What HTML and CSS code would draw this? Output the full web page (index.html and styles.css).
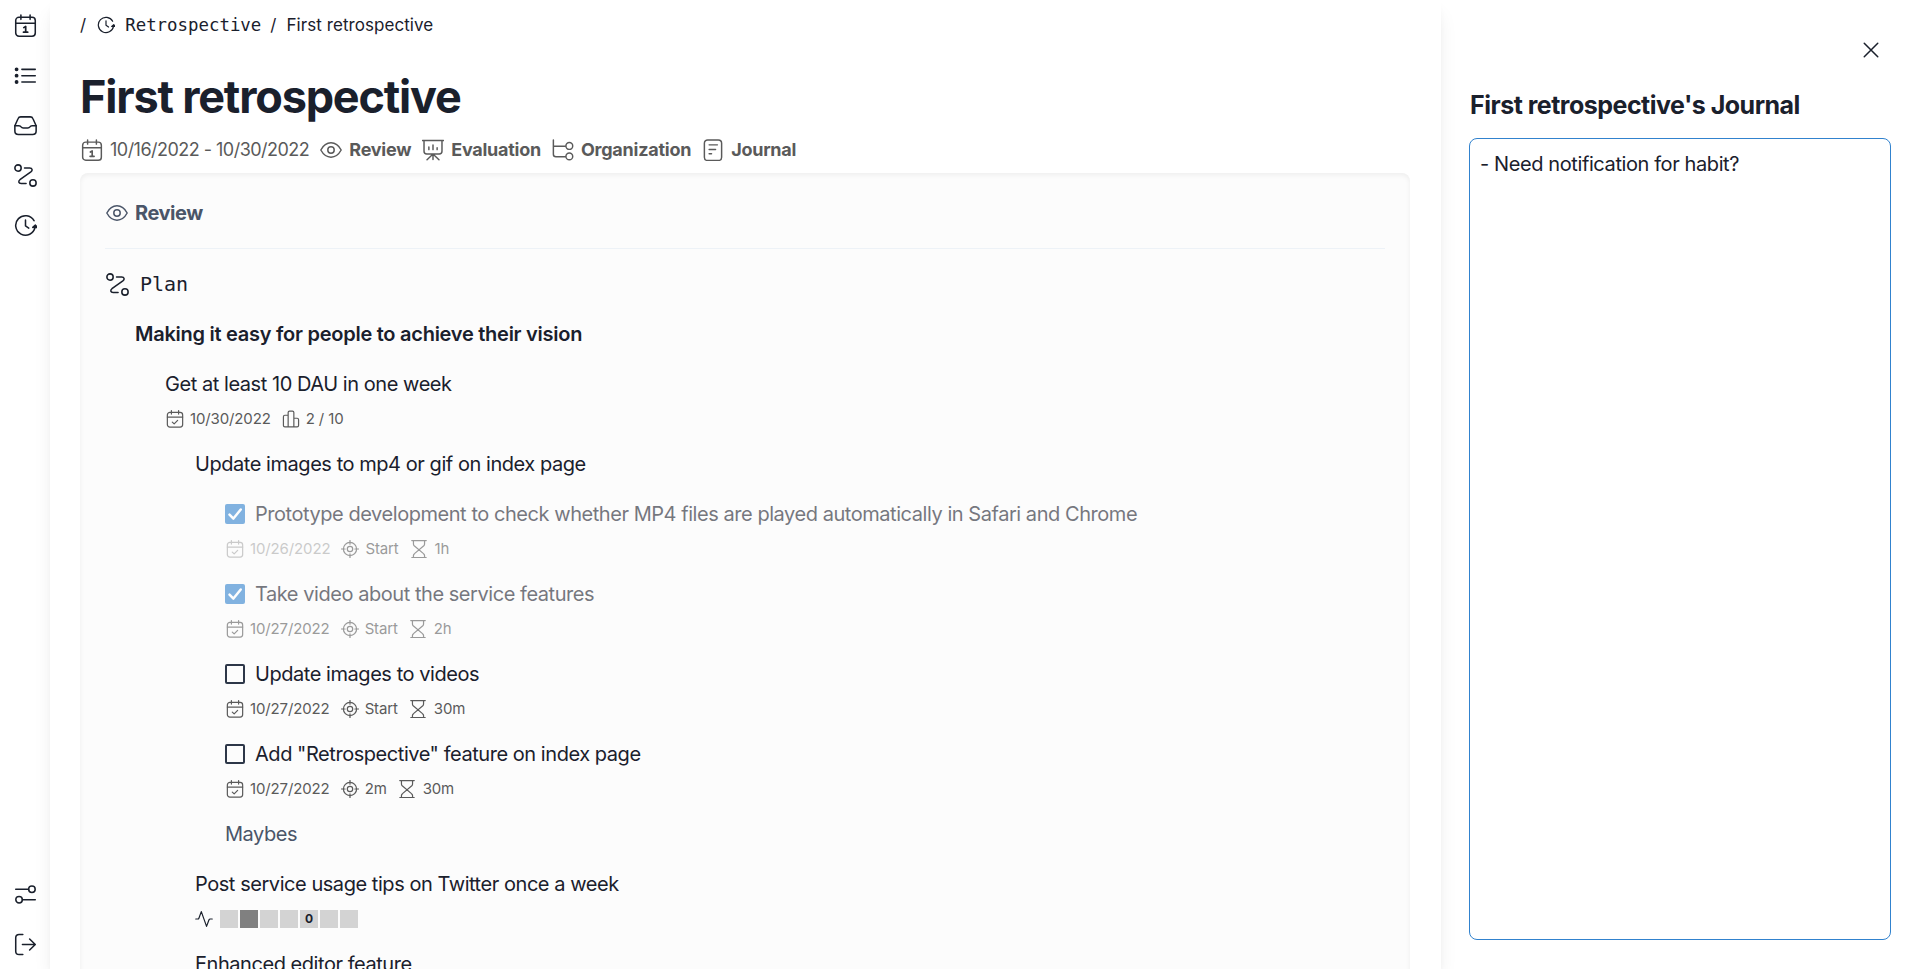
FILE: index.html
```html
<!DOCTYPE html>
<html lang="en">
<head>
  <meta charset="UTF-8">
  <title>First retrospective</title>
  <meta name="viewport" content="width=device-width, initial-scale=1">
  <link rel="stylesheet" href="styles.css">
</head>
<body>
  <!-- icon sprite -->
  <svg class="sprite" xmlns="http://www.w3.org/2000/svg">
    <symbol id="i-calendar" viewBox="0 0 24 24">
      <rect x="1.8" y="3.4" width="20.4" height="19.8" rx="3.4"/>
      <path d="M1.8 9.6h20.4M7.2 1v4.6M16.8 1v4.6"/>
      <path d="M10.2 14.200l2-1.300v6M9.900 19h4.400" stroke-width="1.8"/>
    </symbol>
    <symbol id="i-date" viewBox="0 0 24 24">
      <rect x="1.8" y="3.2" width="20.4" height="19.6" rx="3.4"/>
      <path d="M1.8 9.4h20.4M7.2 .8v4.6M16.8 .8v4.6M8.4 16.2l2.5 2.3 4.6-4.6"/>
    </symbol>
    <symbol id="i-list" viewBox="0 0 24 24">
      <path d="M8.2 5.6h14M8.2 12.2h14M8.2 18.8h14"/>
      <g fill="currentColor"><circle cx="2.7" cy="5.6" r="1.2"/><circle cx="2.7" cy="12.2" r="1.2"/><circle cx="2.7" cy="18.8" r="1.2"/></g>
    </symbol>
    <symbol id="i-inbox" viewBox="0 0 24 24">
      <path d="M.9 12.3L4.2 5Q5 3 7 3h10q2 0 2.8 2l3.3 7.3v5.4q0 3.7-3.7 3.7H4.6Q.9 21.4 .9 17.7z"/>
      <path d="M.9 12.3h4.3q1.5 0 2.2 1.2 .7 1.1 2.2 1.1h4.8q1.5 0 2.2-1.1 .7-1.2 2.2-1.2h4.3"/>
    </symbol>
    <symbol id="i-plan" viewBox="0 0 24 24">
      <circle cx="4.2" cy="4.2" r="3.3"/>
      <circle cx="19.8" cy="19.8" r="3.3"/>
      <path d="M11 4.1h5.4c2.8 0 3.3 2.500 1.200 4.200L6.200 16.400c-2 1.700-1.400 3.900 1.200 3.900h5.200"/>
    </symbol>
    <symbol id="i-retro" viewBox="0 0 24 24">
      <path d="M20.9 7A10.2 10.2 0 1 0 22 13.8"/>
      <path d="M12 6.400v6l3.400 2.300"/>
      <path d="M19.600 14l2.700-2.400 2 2.400z" fill="currentColor"/>
    </symbol>
    <symbol id="i-settings" viewBox="0 0 24 24">
      <path d="M1.8 6.6h13.4M22.2 17.4H8.800"/>
      <circle cx="18.7" cy="6.6" r="3.4"/><circle cx="5.3" cy="17.4" r="3.4"/>
    </symbol>
    <symbol id="i-logout" viewBox="0 0 24 24">
      <path d="M9.2 1.500H5.300q-3.500 0-3.500 3.500v14q0 3.500 3.500 3.500h3.900M8.800 12h13M16.300 6.200L22.200 12l-5.900 5.800"/>
    </symbol>
    <symbol id="i-eye" viewBox="0 0 24 24">
      <path d="M.9 12C3.400 7.400 7.400 4.200 12 4.200s8.600 3.200 11.100 7.800c-2.500 4.600-6.500 7.800-11.100 7.800S3.400 16.600 .9 12z"/>
      <circle cx="12" cy="12" r="3.5"/>
    </symbol>
    <symbol id="i-board" viewBox="0 0 24 24">
      <path d="M.5 1.700h23M2.200 1.700v11.600q0 3 3 3h13.600q3 0 3-3V1.700M12 16.400v6M11.500 17l-6 5.600M12.500 17l6 5.600M7.500 8.600v3M12 6.600v5M16.500 9.600v2"/>
    </symbol>
    <symbol id="i-tree" viewBox="0 0 24 24">
      <path d="M1.500 1v15.600q0 2.800 2.800 2.800h10.300M1.500 7.800h13.100"/>
      <circle cx="18.9" cy="7.6" r="3.7"/><circle cx="18.9" cy="19" r="3.7"/>
    </symbol>
    <symbol id="i-journal" viewBox="0 0 24 24">
      <rect x="2.6" y="1" width="18.8" height="22.4" rx="3.6"/>
      <path d="M7.8 6.4h9M7.8 11.4h7M7.8 16.2h2.6"/>
    </symbol>
    <symbol id="i-chart" viewBox="0 0 24 24">
      <path d="M8.200 22.400V3.300q0-1.900 1.900-1.900h3.800q1.900 0 1.900 1.900v19.100M8.200 7H3.800Q1.900 7 1.900 8.900v11.600q0 1.900 1.900 1.900h16.400q1.900 0 1.900-1.900v-7.600q0-1.900-1.900-1.900h-4.400"/>
    </symbol>
    <symbol id="i-target" viewBox="0 0 24 24">
      <circle cx="12" cy="12" r="8.8"/><circle cx="12" cy="12" r="3.6"/>
      <path d="M12 .5v5M12 18.5v5M.5 12h5M18.5 12h5"/>
    </symbol>
    <symbol id="i-hourglass" viewBox="0 0 24 24">
      <path d="M2.400 .7h19.200M2.400 23.300h19.200M4.600 1v4.200q0 1.500 1 2.500L18 18.200q1.400 1 1.400 2.600V23M19.400 1v4.200q0 1.500-1 2.500L6 18.200q-1.400 1-1.400 2.600V23"/>
    </symbol>
    <symbol id="i-pulse" viewBox="0 0 24 24">
      <path d="M1 12h2.800q1 0 1.400-1.100L8.400 2.200l7 19.600 3.300-8.700q.4-1.100 1.500-1.100H23"/>
    </symbol>
    <symbol id="i-close" viewBox="0 0 24 24">
      <path d="M3 3l18 18M21 3L3 21" stroke-width="2"/>
    </symbol>
    <symbol id="i-check" viewBox="0 0 24 24">
      <path d="M5.4 12.7l4.7 4.8L18.9 6.6" stroke-width="3"/>
    </symbol>
  </svg>

  <div class="layout">
    <nav class="sidebar">
      <a class="nav-item"><svg class="icon"><use href="#i-calendar"/></svg></a>
      <a class="nav-item"><svg class="icon"><use href="#i-list"/></svg></a>
      <a class="nav-item"><svg class="icon"><use href="#i-inbox"/></svg></a>
      <a class="nav-item"><svg class="icon"><use href="#i-plan"/></svg></a>
      <a class="nav-item"><svg class="icon"><use href="#i-retro"/></svg></a>
      <div class="spacer"></div>
      <a class="nav-item"><svg class="icon"><use href="#i-settings"/></svg></a>
      <a class="nav-item"><svg class="icon"><use href="#i-logout"/></svg></a>
    </nav>

    <main class="main">
      <div class="breadcrumb">
        <span>/</span>
        <svg class="icon icon-crumb"><use href="#i-retro"/></svg>
        <span class="mono crumb-mono">Retrospective</span>
        <span class="crumb-sep">/</span>
        <span class="crumb-name">First retrospective</span>
      </div>

      <h1 class="title">First retrospective</h1>

      <div class="tabs">
        <span class="tab tab-date"><svg class="icon"><use href="#i-calendar"/></svg>10/16/2022 - 10/30/2022</span>
        <a class="tab"><svg class="icon"><use href="#i-eye"/></svg>Review</a>
        <a class="tab"><svg class="icon"><use href="#i-board"/></svg>Evaluation</a>
        <a class="tab"><svg class="icon"><use href="#i-tree"/></svg>Organization</a>
        <a class="tab"><svg class="icon"><use href="#i-journal"/></svg>Journal</a>
      </div>

      <section class="panel">
        <h2 class="panel-title"><svg class="icon"><use href="#i-eye"/></svg>Review</h2>
        <div class="plan-head"><svg class="icon"><use href="#i-plan"/></svg><span class="mono">Plan</span></div>

        <div class="row level-1 vision">Making it easy for people to achieve their vision</div>

        <div class="row level-2">Get at least 10 DAU in one week</div>
        <div class="meta level-2">
          <span class="meta-item"><svg class="icon"><use href="#i-date"/></svg>10/30/2022</span>
          <span class="meta-item"><svg class="icon"><use href="#i-chart"/></svg>2 / 10</span>
        </div>

        <div class="row level-3">Update images to mp4 or gif on index page</div>

        <div class="row level-4 task done"><span class="checkbox checked"><svg class="icon"><use href="#i-check"/></svg></span>Prototype development to check whether MP4 files are played automatically in Safari and Chrome</div>
        <div class="meta level-4 done">
          <span class="meta-item past"><svg class="icon"><use href="#i-date"/></svg>10/26/2022</span>
          <span class="meta-item"><svg class="icon"><use href="#i-target"/></svg>Start</span>
          <span class="meta-item"><svg class="icon"><use href="#i-hourglass"/></svg>1h</span>
        </div>

        <div class="row level-4 task done"><span class="checkbox checked"><svg class="icon"><use href="#i-check"/></svg></span>Take video about the service features</div>
        <div class="meta level-4 done">
          <span class="meta-item"><svg class="icon"><use href="#i-date"/></svg>10/27/2022</span>
          <span class="meta-item"><svg class="icon"><use href="#i-target"/></svg>Start</span>
          <span class="meta-item"><svg class="icon"><use href="#i-hourglass"/></svg>2h</span>
        </div>

        <div class="row level-4 task"><span class="checkbox"></span>Update images to videos</div>
        <div class="meta level-4">
          <span class="meta-item"><svg class="icon"><use href="#i-date"/></svg>10/27/2022</span>
          <span class="meta-item"><svg class="icon"><use href="#i-target"/></svg>Start</span>
          <span class="meta-item"><svg class="icon"><use href="#i-hourglass"/></svg>30m</span>
        </div>

        <div class="row level-4 task"><span class="checkbox"></span>Add "Retrospective" feature on index page</div>
        <div class="meta level-4">
          <span class="meta-item"><svg class="icon"><use href="#i-date"/></svg>10/27/2022</span>
          <span class="meta-item"><svg class="icon"><use href="#i-target"/></svg>2m</span>
          <span class="meta-item"><svg class="icon"><use href="#i-hourglass"/></svg>30m</span>
        </div>

        <div class="row level-4 maybes">Maybes</div>

        <div class="row level-3">Post service usage tips on Twitter once a week</div>
        <div class="meta level-3 habit">
          <svg class="icon"><use href="#i-pulse"/></svg>
          <div class="days">
            <i class="day"></i><i class="day day-done"></i><i class="day"></i><i class="day"></i><b class="day">0</b><i class="day"></i><i class="day"></i>
          </div>
        </div>

        <div class="row level-3">Enhanced editor feature</div>
      </section>
    </main>

    <aside class="journal">
      <button class="close" aria-label="Close"><svg class="icon"><use href="#i-close"/></svg></button>
      <h2 class="journal-title">First retrospective's Journal</h2>
      <div class="editor" contenteditable="true">- Need notification for habit?</div>
    </aside>
  </div>
</body>
</html>
```

FILE: styles.css
```css
* { box-sizing: border-box; }
body {
  margin: 0;
  background: #fff; color: #1a202c;
  font-family: Inter, "Liberation Sans", sans-serif;
  font-size: 20px; line-height: 30px;
  letter-spacing: -.45px;
  height: 100vh; overflow: hidden;
}
h1, h2 { margin: 0; }
.sprite { display: none; }
.icon {
  width: 22px; height: 22px; flex: none;
  fill: none; stroke: currentColor; stroke-width: 1.6;
  stroke-linecap: round; stroke-linejoin: round;
  overflow: visible;
}
.mono { font-family: "DejaVu Sans Mono", monospace; letter-spacing: 0; }
.layout { display: flex; height: 969px; }

/* left navigation */
.sidebar {
  width: 50px; height: 969px;
  padding-left: 1px;
  display: flex; flex-direction: column;
}
.nav-item {
  height: 50px;
  display: flex; align-items: center; justify-content: center;
}
.nav-item .icon { width: 23px; height: 23px; }
.spacer { flex: 1; }

.main {
  position: relative;
  width: 1391px; height: 969px;
  padding: 0 31px 0 30px;
  background: #fff;
  box-shadow: 0 12px 19px -4px rgba(0,0,0,.1), 0 5px 8px -3px rgba(0,0,0,.05);
  overflow: hidden;
}
.breadcrumb {
  display: flex; align-items: center;
  height: 50px;
  font-size: 17px;
  letter-spacing: .06px;
}
.icon-crumb { width: 18px; height: 18px; margin: 0 10px 0 11px; }
.crumb-mono { font-size: 17.4px; }
.crumb-sep { margin: 0 10px 0 9px; }
.title {
  margin-top: 17px;
  font-size: 45px; line-height: 60px; font-weight: 700;
  letter-spacing: -1.18px;
}
.tabs {
  display: flex; align-items: center; gap: 10px;
  height: 46px;
  color: #5a5a5a;
  font-size: 18px;
}
.tab { display: flex; align-items: center; gap: 7px; font-weight: 700; letter-spacing: -.25px; }
.tab-date { font-weight: 400; letter-spacing: -.52px; }
.tab .icon { margin-left: 1px; }

.panel {
  height: 820px;
  padding: 25px;
  background: #fcfcfc;
  border-radius: 8px;
  box-shadow: inset 0 2px 5px rgba(0,0,0,.06);
}
.panel-title {
  display: flex; align-items: center; gap: 7px;
  height: 51px; padding: 1px 1px 21px;
  border-bottom: 1px solid #edf2f7;
  font-size: 20px; line-height: 28px; font-weight: 700;
  letter-spacing: -.45px;
  color: #4a5568;
}
.plan-head {
  display: flex; align-items: center; gap: 11px;
  height: 60px; margin: 5px 0 -5px; padding-left: 1px;
}
.plan-head .icon { width: 23px; height: 23px; }
.row { display: flex; align-items: center; height: 50px; white-space: nowrap; }
.meta {
  display: flex; align-items: center; gap: 11px;
  height: 30px; margin-top: -5px; padding-left: 1px;
  color: #5a5a5a;
  font-size: 15px;
  letter-spacing: -.13px;
}
.meta + .row { margin-top: 5px; }
.level-1 { margin-left: 30px; }
.level-2 { margin-left: 60px; }
.level-3 { margin-left: 90px; }
.level-4 { margin-left: 120px; }
.vision { font-weight: 600; letter-spacing: -.26px; }
.maybes { color: #4a5568; }
.done { opacity: .6; }
.past { opacity: .5; }
.meta-item { display: flex; align-items: center; gap: 6px; }
.meta-item:nth-child(3) { gap: 7px; }
.meta .icon { width: 18px; height: 18px; }

.checkbox {
  display: flex;
  width: 20px; height: 20px; margin-right: 10px;
  border: 2px solid #2d3748; border-radius: 2px;
}
.checked { border: 0; background: #3182ce; color: #fff; }
.checked .icon { width: 20px; height: 20px; }

.habit { gap: 7px; height: 29px; margin-bottom: 6px; padding-left: 0; color: #1a202c; }
.days { display: flex; gap: 2px; }
.day {
  width: 18px; height: 18px;
  background: #d3d3d3;
  font-size: 12px; line-height: 18px; text-align: center;
}
.day-done { background: #808080; }

/* journal drawer */
.journal {
  flex: 1;
  display: flex; flex-direction: column;
  padding: 30px 29px 29px 28px;
}
.close {
  align-self: flex-end;
  width: 40px; height: 40px; padding: 0;
  display: flex; align-items: center; justify-content: center;
  background: none; border: 0; color: #1a202c;
}
.close .icon { width: 18px; height: 18px; }
.journal-title {
  margin: 20px 0 17px 1px;
  font-size: 25px; line-height: 31px; font-weight: 700;
  letter-spacing: -.5px;
}
.editor {
  flex: 1;
  padding: 10px 10px;
  border: 1px solid #3182ce; border-radius: 8px;
  outline: none;
  letter-spacing: -.4px;
}
```
